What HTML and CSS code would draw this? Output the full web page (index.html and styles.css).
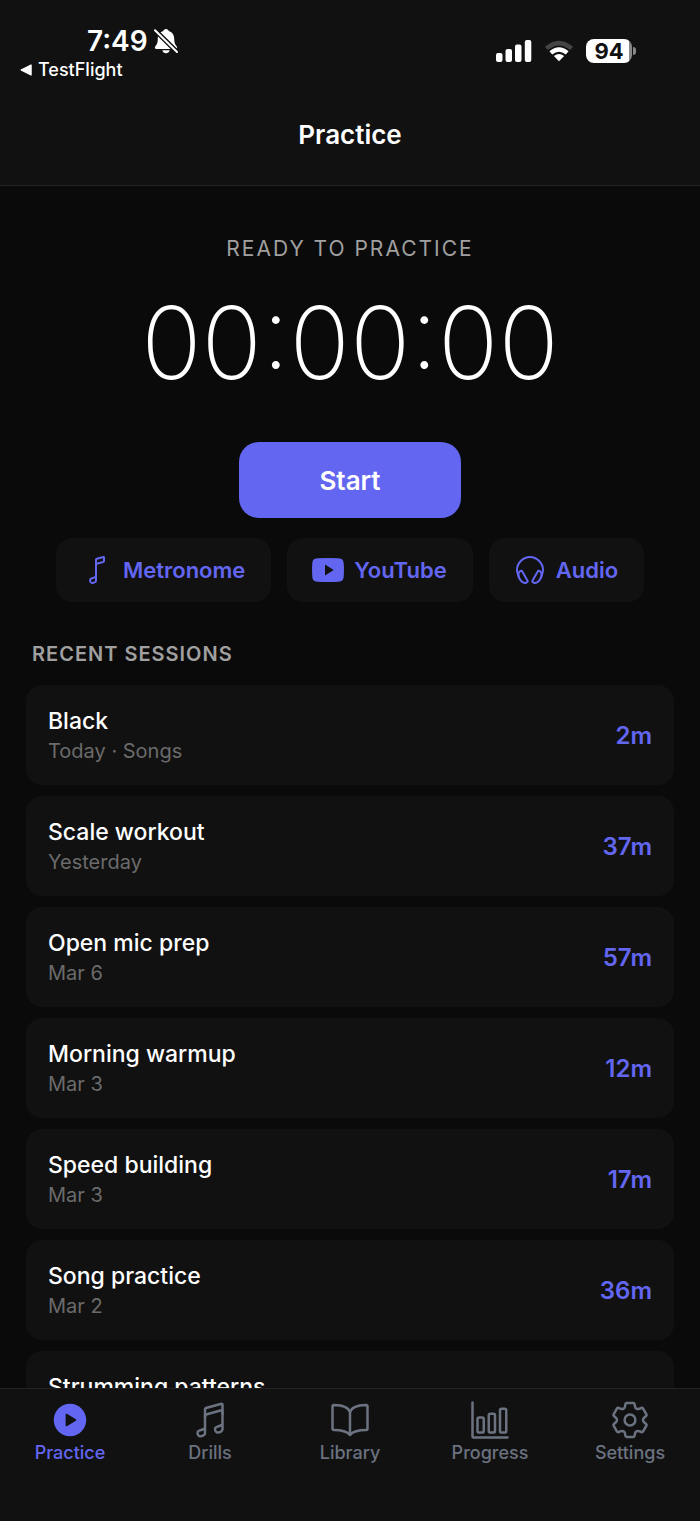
FILE: index.html
```html
<!DOCTYPE html>
<html lang="en">
<head>
  <meta charset="UTF-8">
  <meta name="viewport" content="width=device-width, initial-scale=1">
  <title>Practice</title>
  <link rel="stylesheet" href="styles.css">
</head>
<body>

  <div class="app">
    <!-- Status bar -->
    <div class="status-bar">
      <div class="status-left">
        <div class="clock">
          <span>7:49</span>
          <svg class="bell" viewBox="0 0 24 26" aria-hidden="true">
            <path d="M12 1C10.500 1 9.500 2 9.300 3 6 4 3.800 6.800 3.800 10.500 3.800 15 2.800 16.500 1.200 18.500 .4 19.700 1 21 2.500 21H21.500C23 21 23.600 19.700 22.800 18.500 21.200 16.500 20.200 15 20.200 10.500 20.200 6.800 18 4 14.700 3 14.500 2 13.500 1 12 1zM8.300 22.200C8.800 24 10.200 25.200 12 25.200s3.200-1.200 3.700-3z" fill="#fff"/>
            <path d="M0 1.200L24 25" stroke="#111" stroke-width="4.800"/>
            <path d="M1 2.200L23 24" stroke="#fff" stroke-width="2" stroke-linecap="round"/>
          </svg>
        </div>
        <a class="back-link" href="#">
          <svg viewBox="0 0 12 12" aria-hidden="true"><path d="M11.200 .8V11.200L.8 6z" fill="#fff" stroke="#fff" stroke-linejoin="round"/></svg>
          TestFlight
        </a>
      </div>
      <div class="status-right">
        <svg class="signal" viewBox="0 0 36 24" aria-hidden="true">
          <rect x="0" y="14" width="6.500" height="9" rx="2"/>
          <rect x="9.500" y="10" width="6.500" height="13" rx="2"/>
          <rect x="19" y="5.500" width="6.500" height="17.500" rx="2"/>
          <rect x="28.800" y="1" width="6.500" height="22" rx="2"/>
        </svg>
        <svg class="wifi" viewBox="0 0 32 24" aria-hidden="true">
          <path d="M1 7.500Q16-5.500 31 7.500L28 11Q16 1 4 11z" fill="#444"/>
          <path d="M5.800 12.300Q16 3.800 26.200 12.300L23.200 15.600Q16 9.800 8.800 15.600z" fill="#fff"/>
          <path d="M10.500 17.300Q16 13 21.500 17.300L16 23z" fill="#fff"/>
        </svg>
        <div class="battery"><span>94</span></div>
      </div>
    </div>

    <header class="header">
      <h1>Practice</h1>
    </header>

    <main class="content">
      <!-- Timer -->
      <section class="timer">
        <p class="timer-label">READY TO PRACTICE</p>
        <div class="timer-value">00:00:00</div>
        <button class="start" type="button">Start</button>
      </section>

      <div class="tools">
        <button class="tool" type="button">
          <svg class="icon" viewBox="0 0 512 512" aria-hidden="true">
            <path class="line" d="M240 343.310V424a32.280 32.280 0 01-21.880 30.650l-21.470 7.230c-25.900 8.710-52.650-10.750-52.650-38.320h0A34.290 34.290 0 01167.250 391l50.870-17.120A32.290 32.290 0 00240 343.240V92a16.130 16.130 0 0112.060-15.660L360.490 48.200A6 6 0 01368 54v57.760a16.130 16.130 0 01-12.120 15.670l-91.640 23.130A32.250 32.250 0 00240 181.910V221"/>
          </svg>
          Metronome
        </button>
        <button class="tool" type="button">
          <svg class="icon" viewBox="0 0 32 32" aria-hidden="true">
            <path fill="currentColor" fill-rule="evenodd" d="M5.500 4.300Q16 3.700 26.500 4.300C30 4.500 31.500 6 31.700 9.500Q32.200 16 31.700 22.500C31.500 26 30 27.500 26.500 27.700Q16 28.300 5.500 27.700C2 27.500.5 26 .3 22.500Q-.2 16 .3 9.500C.5 6 2 4.500 5.500 4.300zM13 10.500V21.500L21.700 16z"/>
          </svg>
          YouTube
        </button>
        <button class="tool" type="button">
          <svg class="icon" viewBox="0 0 512 512" aria-hidden="true">
            <path class="line" d="M83 384c-13-33-35-93.370-35-128C48 141.120 149.330 48 256 48s208 93.120 208 208c0 34.630-23 97-35 128"/>
            <path class="line" d="M108.390 270.130l-13.690 8h0c-30.230 17.700-31.700 72.410-3.380 122.200s75.870 75.810 106.100 58.120h0l13.690-8a16.160 16.160 0 005.780-21.870L130 276a15.740 15.740 0 00-21.610-5.870zM403.610 270.130l13.690 8h0c30.230 17.690 31.740 72.400 3.380 122.190s-75.870 75.810-106.100 58.120h0l-13.690-8a16.160 16.160 0 01-5.780-21.870L382 276a15.740 15.740 0 0121.610-5.870z"/>
          </svg>
          Audio
        </button>
      </div>

      <!-- Recent sessions -->
      <h2>RECENT SESSIONS</h2>
      <ul class="sessions">
        <li class="session">
          <div><h3>Black</h3><p>Today · Songs</p></div>
          <span class="duration">2m</span>
        </li>
        <li class="session">
          <div><h3>Scale workout</h3><p>Yesterday</p></div>
          <span class="duration">37m</span>
        </li>
        <li class="session">
          <div><h3>Open mic prep</h3><p>Mar 6</p></div>
          <span class="duration">57m</span>
        </li>
        <li class="session">
          <div><h3>Morning warmup</h3><p>Mar 3</p></div>
          <span class="duration">12m</span>
        </li>
        <li class="session">
          <div><h3>Speed building</h3><p>Mar 3</p></div>
          <span class="duration">17m</span>
        </li>
        <li class="session">
          <div><h3>Song practice</h3><p>Mar 2</p></div>
          <span class="duration">36m</span>
        </li>
        <li class="session">
          <div><h3>Strumming patterns</h3></div>
        </li>
      </ul>
    </main>

    <!-- Tab bar -->
    <nav class="tabs">
      <a class="tab active" href="#">
        <svg viewBox="0 0 512 512" aria-hidden="true">
          <path fill="currentColor" d="M256 48C141.310 48 48 141.310 48 256s93.310 208 208 208 208-93.310 208-208S370.690 48 256 48zm74.770 217.300l-114.450 69.140a10.780 10.780 0 01-16.320-9.310V186.870a10.780 10.780 0 0116.320-9.310l114.450 69.140a10.890 10.890 0 010 18.600z"/>
        </svg>
        Practice
      </a>
      <a class="tab" href="#">
        <svg viewBox="0 0 512 512" aria-hidden="true">
          <path class="line" d="M192 218v-6c0-14.840 10-27 24.240-30.590l174.590-46.680A20 20 0 01416 154v22"/>
          <path class="line" d="M416 295.940v80c0 13.910-8.930 25.590-22 30l-22 8c-25.900 8.720-52-10.420-52-38h0a33.370 33.370 0 0123-32l51-18.150c13.070-4.400 22-15.940 22-29.850V58a10 10 0 00-12.600-9.610L204 102a16.480 16.480 0 00-12 16v226c0 13.910-8.930 25.600-22 30l-52 18c-13.880 4.680-22 17.220-22 32h0c0 27.580 26.520 46.550 52 38l22-8c13.070-4.400 22-16.080 22-30v-80"/>
        </svg>
        Drills
      </a>
      <a class="tab" href="#">
        <svg viewBox="0 0 512 512" aria-hidden="true">
          <path class="line" d="M256 160c16-63.160 76.430-95.410 208-96a15.940 15.940 0 0116 16v288a16 16 0 01-16 16c-128 0-177.450 25.810-208 64-30.370-38-80-64-208-64-9.880 0-16-8.050-16-17.930V80a15.940 15.940 0 0116-16c131.570.59 192 32.840 208 96zM256 160v288"/>
        </svg>
        Library
      </a>
      <a class="tab" href="#">
        <svg viewBox="0 0 512 512" aria-hidden="true">
          <path class="line" d="M32 32v432a16 16 0 0016 16h432"/>
          <rect class="line" x="96" y="224" width="80" height="192" rx="20"/>
          <rect class="line" x="240" y="176" width="80" height="240" rx="20"/>
          <rect class="line" x="384" y="112" width="80" height="304" rx="20"/>
        </svg>
        Progress
      </a>
      <a class="tab" href="#">
        <svg viewBox="-20 -20 40 40" aria-hidden="true">
          <path class="gear" d="M-3.300-17H3.300Q4.400-17 4.600-15.900L5-13.400Q5.200-12 6.400-11.300 7.600-10.600 8.900-11.100L11.300-12Q12.500-12.400 13.100-11.400L16.400-5.700Q16.900-4.700 16.100-4L14.100-2.300Q13-1.400 13 0 13 1.400 14.100 2.300L16.100 4Q16.900 4.700 16.400 5.700L13.100 11.400Q12.500 12.400 11.300 12L8.900 11.100Q7.600 10.600 6.400 11.300 5.200 12 5 13.400L4.600 15.900Q4.400 17 3.300 17H-3.300Q-4.400 17-4.600 15.900L-5 13.400Q-5.200 12-6.400 11.300-7.600 10.600-8.900 11.100L-11.300 12Q-12.500 12.400-13.100 11.400L-16.400 5.700Q-16.900 4.700-16.100 4L-14.100 2.300Q-13 1.400-13 0-13-1.400-14.100-2.300L-16.100-4Q-16.900-4.700-16.400-5.700L-13.100-11.400Q-12.500-12.400-11.300-12L-8.900-11.100Q-7.600-10.600-6.400-11.300-5.200-12-5-13.400L-4.600-15.900Q-4.400-17-3.300-17z"/>
          <circle class="gear" r="5.400"/>
        </svg>
        Settings
      </a>
    </nav>
  </div>

</body>
</html>
```
FILE: styles.css
```css
* {
  box-sizing: border-box;
}

body {
  margin: 0;
  background-color: #0a0a0a;
  color: #fff;
  font-family: Inter, "Liberation Sans", sans-serif;
}

h1, h2, h3, p, ul {
  margin: 0;
  padding: 0;
}

a {
  color: inherit;
  text-decoration: none;
}

button {
  border: none;
  font-family: inherit;
  cursor: pointer;
}

.app {
  display: flex;
  flex-direction: column;
  height: 100vh;
  overflow: hidden;
}

/* Status bar */
.status-bar {
  display: flex;
  justify-content: space-between;
  padding: 24px 68px 0 20px;
  background-color: #111;
}

.clock {
  display: flex;
  align-items: center;
  gap: 6px;
  padding-left: 67px;
  font-size: 28px;
  font-weight: 600;
  line-height: 34px;
}

.bell {
  width: 24px;
  height: 26px;
}

.back-link {
  display: flex;
  align-items: center;
  gap: 6px;
  font-size: 18px;
  font-weight: 500;
  line-height: 24px;
}

.back-link svg {
  width: 12px;
  height: 12px;
}

.status-right {
  display: flex;
  align-items: center;
  gap: 12px;
  height: 54px;
}

.signal {
  width: 36px;
  height: 24px;
  fill: #fff;
}

.wifi {
  width: 30px;
  height: 24px;
}

.battery {
  position: relative;
  width: 46px;
  height: 24px;
  border-radius: 8px;
  background: linear-gradient(to right, #fff 94%, #888 94%);
  color: #111;
  font-size: 22px;
  font-weight: 700;
  line-height: 24px;
  text-align: center;
}

.battery::after {
  content: "";
  position: absolute;
  top: 8px;
  right: -4px;
  width: 3px;
  height: 8px;
  border-radius: 0 4px 4px 0;
  background-color: #888;
}

.header {
  padding: 37px 20px 34px;
  border-bottom: 1px solid #222;
  background-color: #111;
  text-align: center;
}

h1 {
  font-size: 26px;
  font-weight: 600;
  line-height: 32px;
}

/* Timer */
.content {
  flex: 1;
  min-height: 0;
  padding: 47px 26px 0;
  overflow: hidden;
}

.timer {
  display: flex;
  flex-direction: column;
  align-items: center;
}

.timer-label {
  color: #a0a0a0;
  font-size: 21px;
  letter-spacing: 2px;
  line-height: 32px;
}

.timer-value {
  margin: 18px 0 39px;
  font-size: 100px;
  font-weight: 200;
  line-height: 120px;
}

.start {
  padding: 23px 80px 21px;
  border-radius: 20px;
  background-color: #6366f1;
  color: #fff;
  font-size: 26px;
  font-weight: 600;
  line-height: 32px;
}

.tools {
  display: flex;
  justify-content: center;
  gap: 16px;
  margin-top: 20px;
}

.tool {
  display: flex;
  align-items: center;
  gap: 10px;
  padding: 16px 26px 16px 25px;
  border-radius: 16px;
  background-color: #111;
  color: #6366f1;
  font-size: 22px;
  font-weight: 600;
  line-height: 32px;
}

.icon {
  width: 32px;
  height: 32px;
}

.line {
  fill: none;
  stroke: currentColor;
  stroke-width: 32;
  stroke-linecap: round;
  stroke-linejoin: round;
}

/* Recent sessions */
h2 {
  margin: 37px 0 16px;
  padding-left: 6px;
  color: #a0a0a0;
  font-size: 20px;
  font-weight: 600;
  letter-spacing: 1px;
  line-height: 30px;
}

.sessions {
  display: flex;
  flex-direction: column;
  gap: 11px;
  list-style: none;
}

.session {
  display: flex;
  align-items: center;
  justify-content: space-between;
  padding: 20px 22px;
  border-radius: 16px;
  background-color: #111;
}

h3 {
  font-size: 23px;
  font-weight: 500;
  line-height: 32px;
}

.session p {
  color: #6b6b6b;
  font-size: 20px;
  line-height: 28px;
}

.duration {
  color: #6366f1;
  font-size: 24px;
  font-weight: 600;
}

/* Tab bar */
.tabs {
  display: flex;
  padding: 11px 0 56px;
  border-top: 1px solid #222;
  background-color: #111;
}

.tab {
  display: flex;
  flex: 1;
  flex-direction: column;
  align-items: center;
  gap: 1px;
  color: #6b7280;
  font-size: 18px;
  font-weight: 500;
  line-height: 24px;
}

.tab.active {
  color: #6366f1;
}

.tab svg {
  width: 40px;
  height: 40px;
}

.gear {
  fill: none;
  stroke: currentColor;
  stroke-width: 2.5;
}
```
